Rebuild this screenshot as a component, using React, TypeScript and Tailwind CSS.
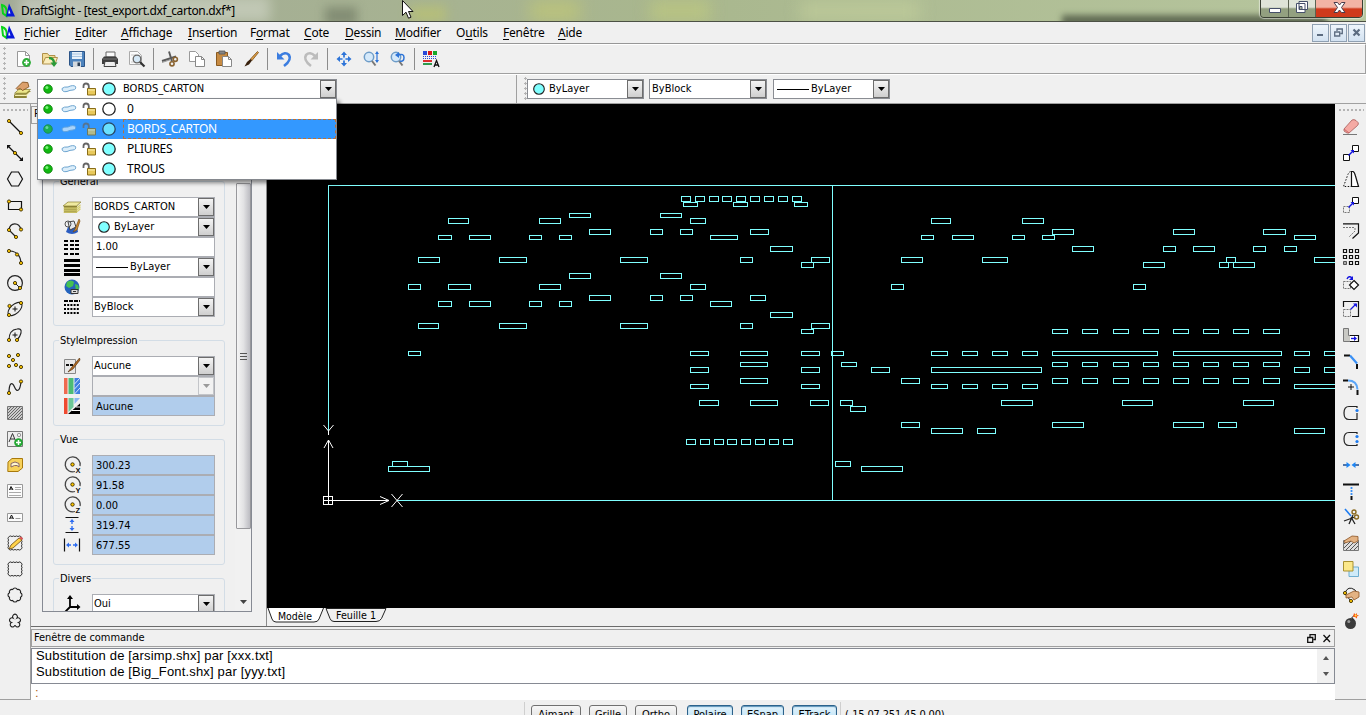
import React from "react";

const TAHOMA = "font-['DejaVu_Sans_Condensed','DejaVu_Sans',sans-serif] text-[11px] leading-[14px] text-black whitespace-nowrap";
const SEGOE = "font-['Noto_Sans','Open_Sans',sans-serif] text-[12px] leading-[16px] whitespace-nowrap";

/* ---------- drawing helpers ---------- */

function Icon({ children, size = 16 }: { children: React.ReactNode; size?: number }) {
  return (
    <svg width={size} height={size} viewBox="0 0 16 16" fill="none" stroke="none" className="block shrink-0 overflow-visible">
      {children}
    </svg>
  );
}

function Dots({ at }: { at: number[][] }) {
  return (
    <>
      {at.map(([x, y]) => (
        <circle key={`${x}-${y}`} cx={x} cy={y} r="1.6" fill="#ffc800" stroke="#3a2c00" strokeWidth="0.9" />
      ))}
    </>
  );
}

const scallop =
  "M2 2" +
  "a1.6 1.6 0 0 1 3 0".repeat(4) +
  "a1.6 1.6 0 0 1 0 3".repeat(4) +
  "a1.6 1.6 0 0 1 -3 0".repeat(4) +
  "a1.6 1.6 0 0 1 0 -3".repeat(4);

/* ---------- left: drawing tools ---------- */

const drawTools: React.ReactNode[] = [
  <><path d="M2 2L14 14" stroke="#111" strokeWidth="1.200" /><Dots at={[[2, 2], [14, 14]]} /></>,
  <><path d="M1 1L15 15" stroke="#111" strokeWidth="1.200" /><path d="M0 0h4L0 4zM16 16h-4l4-4z" fill="#111" /><Dots at={[[8, 8]]} /></>,
  <path d="M4.500 1h7l4 7l-4 7h-7L.5 8z" stroke="#111" strokeWidth="1.200" />,
  <><path d="M1.500 4.500h13v8h-13z" stroke="#111" strokeWidth="1.200" /><Dots at={[[2, 4.500], [14, 12.500]]} /></>,
  <><path d="M14 6.500C12-1 3-1 2 7l7 7" stroke="#222" strokeWidth="1.200" /><Dots at={[[2, 7], [14, 6.500], [9, 14]]} /></>,
  <><path d="M2 2Q13 2 14 14" stroke="#222" strokeWidth="1.200" /><Dots at={[[2, 2], [10, 5.500], [14, 14]]} /></>,
  <><circle cx="8" cy="8" r="7.400" stroke="#222" strokeWidth="1.200" /><path d="M8 8l5 5" stroke="#222" /><Dots at={[[8, 8], [13, 13]]} /></>,
  <><ellipse cx="8" cy="8" rx="8.500" ry="4.500" transform="rotate(-42 8 8)" stroke="#222" strokeWidth="1.100" /><path d="M8 5.500v5M5.500 8h5" stroke="#111" /><Dots at={[[2, 14], [2.500, 5], [14, 2]]} /></>,
  <><path d="M2 13Q2 3 10 2Q15 1 14 6Q13 10 10 13" stroke="#222" strokeWidth="1.100" /><path d="M8 5.500v5M5.500 8h5" stroke="#111" /><Dots at={[[2, 13], [10, 13]]} /></>,
  <Dots at={[[2, 3], [11, 2], [6, 7], [2, 13], [9, 12], [14, 14]]} />,
  <><path d="M2 14C2 4 5 2 7.500 8S13 12 14 3" stroke="#222" strokeWidth="1.200" /><Dots at={[[2, 14], [14, 2.500]]} /></>,
  <><path d="M.5 1.500h15v13h-15z" fill="#ccc" stroke="#777" /><path d="M1 5l4-4M1 8l7-7M1 11l10-10M1 14L14 1M4 14L15 3M7 14l8-8M10 14l5-5M13 14l2-2" stroke="#666" /></>,
  <>
    <path d="M.5.5h15v15H.5z" fill="#eee" stroke="#777" />
    <path d="M2 11L5.500 2.500L9 11M3.500 8h4" stroke="#333" />
    <circle cx="12" cy="4" r="1.700" stroke="#999" /><circle cx="11.500" cy="11.500" r="4.300" fill="#22a832" /><path d="M11.500 9v5M9 11.500h5" stroke="#fff" strokeWidth="1.500" />
  </>,
  <><path d="M1 5l4-3.500h10.500V11L11 14.500H.8z" fill="#f7d15a" stroke="#a8790c" /><path d="M4 10V6.500q4-3 8 0V10l-2-1.500H7.500z" fill="#fff6d0" stroke="#866" /></>,
  <><path d="M.5 1.500h15v13h-15z" fill="#fcfcfc" stroke="#999" /><path d="M2.500 7L4 3.500L6 7M3 6h2.500" stroke="#111" /><path d="M8 4.500h6M8 6.500h6M2 9.500h12M2 12.500h12" stroke="#aaa" /></>,
  <><path d="M.5 4.500h15v8h-15z" fill="#fcfcfc" stroke="#999" /><path d="M2.500 10L4.500 6L6.500 10M3 9h3" stroke="#111" /><path d="M8.500 9.500h5" stroke="#999" /></>,
  <><path d={scallop} stroke="#222" strokeWidth="0.900" /><path d="M2 14l2-4L12 3l3 2L6 13z" fill="#ffd24a" stroke="#6b4a10" strokeWidth="0.800" /><path d="M12 3l2-1.500L16 3.500L15 5z" fill="#d55" /></>,
  <path d={scallop} stroke="#222" />,
  <path d="M5.700 2.500A2.500 2.500 0 0 1 10.300 2.500A2.500 2.500 0 0 1 13.500 5.700A2.500 2.500 0 0 1 13.500 10.300A2.500 2.500 0 0 1 10.300 13.500A2.500 2.500 0 0 1 5.700 13.500A2.500 2.500 0 0 1 2.500 10.300A2.500 2.500 0 0 1 2.500 5.700A2.500 2.500 0 0 1 5.700 2.500z" stroke="#222" strokeWidth="1.100" />,
  <path d="M6 5A2.400 2.400 0 1 1 10 5A2.400 2.400 0 1 1 11.500 9.500A2.400 2.400 0 1 1 8 12A2.400 2.400 0 1 1 4.500 9.500A2.400 2.400 0 1 1 6 5z" stroke="#222" strokeWidth="1.100" />,
];

/* ---------- right: modification tools ---------- */

const editTools: React.ReactNode[] = [
  <><path d="M0 15.500h14" stroke="#777" /><path d="M1 10L9 1q2-1 4 .5l2 2q1 1.500-.5 3L6 14H4L1 12z" fill="#f5aaa4" stroke="#a65a58" strokeWidth="0.800" /><path d="M1 10l5 4" stroke="#c66" /></>,
  <><path d="M.5 9.500h6v6h-6zM9.500.5h6v6h-6z" fill="#fff" stroke="#111" /><path d="M5.500 10.500L10 6" stroke="#1414e0" strokeWidth="1.400" /><path d="M7.500 5h3.500v3.500z" fill="#1414e0" /></>,
  <><path d="M8.500.5H10Q11.500 1 12.500 5L15.500 15.500H8.500z" fill="#fff" stroke="#111" strokeWidth="1.200" /><path d="M7.500.5Q5.500 1 4 6L.5 15.500H8" stroke="#111" strokeDasharray="1.500 1.500" /></>,
  <><path d="M.5 9.500h6v6h-6z" stroke="#777" strokeDasharray="2 1" /><path d="M9.500.5h6v6h-6z" fill="#fff" stroke="#111" /><path d="M5.500 10.500L10 6" stroke="#1414e0" strokeWidth="1.400" /><path d="M7.500 5h3.500v3.500z" fill="#1414e0" /></>,
  <><path d="M0 .8h15.500V10l-6 5.500" stroke="#111" strokeWidth="1.200" /><path d="M0 4.500h12M12 5v3l-6 6" stroke="#777" strokeDasharray="2 1" /></>,
  <><path d="M.5.5h3v3h-3zM6.500.5h3v3h-3zM12.500.5h3v3h-3zM.5 6.500h3v3h-3zM6.500 6.500h3v3h-3zM12.500 6.500h3v3h-3zM6.500 12.500h3v3h-3zM12.500 12.500h3v3h-3z" fill="#fff" stroke="#111" strokeWidth="1.200" /><path d="M.5 12.500h3v3h-3z" fill="#aaa" stroke="#555" /></>,
  <><path d="M.5 6.500h7v7h-7z" stroke="#777" strokeDasharray="2 1" /><path d="M11 5.500l4.500 4.500l-4.500 4.500L6.500 10z" fill="#fff" stroke="#111" strokeWidth="1.200" /><path d="M4 4Q6 0 9 3" stroke="#1414e0" strokeWidth="1.400" /><path d="M10 1v4H6z" fill="#1414e0" /></>,
  <><path d="M.5 6V.5h15v15H9" stroke="#111" strokeWidth="1.200" /><path d="M.5 8.500h7v7h-7z" stroke="#777" strokeDasharray="2 1" /><path d="M7.500 8.500L13 3" stroke="#1414e0" strokeWidth="1.300" /><path d="M10 2.500h4v4z" fill="#1414e0" /></>,
  <><path d="M.5 1.500h5v7h2v6h-7z" fill="#c9c9c4" stroke="#777" /><path d="M7 8.500h8.500v6H7" fill="#fff" stroke="#111" strokeWidth="1.200" /><path d="M8 11.500h4" stroke="#1414e0" strokeWidth="1.400" /><path d="M11 9l3 2.500l-3 2.500z" fill="#1414e0" /></>,
  <><path d="M1 2.500h6M14 11v5" stroke="#111" strokeWidth="2" /><path d="M7 2.500l7 8" stroke="#3a90f5" strokeWidth="2.200" /></>,
  <><path d="M0 1.500h5M14.500 11v5" stroke="#111" strokeWidth="2" /><path d="M5 1.500q9 0 9.500 9" stroke="#5aa5f8" strokeWidth="2" /><path d="M8 5v6M5 8h6" stroke="#111" /></>,
  <><path d="M14 3V1.500H6Q1 1.500 1 8t5 6.500h8V8" stroke="#222" strokeWidth="1.200" /><circle cx="14" cy="5.500" r="1.600" fill="#1d7bf0" /></>,
  <><path d="M14 3V1.500H6Q1 1.500 1 8t5 6.500h8V13" stroke="#222" strokeWidth="1.200" /><circle cx="14" cy="5.500" r="1.600" fill="#1d7bf0" /><circle cx="14" cy="10.500" r="1.600" fill="#1d7bf0" /></>,
  <><path d="M0 8h5M11 8h5" stroke="#1b4c92" strokeWidth="1.600" /><path d="M3.500 5L7.500 8l-4 3zM12.500 5L8.500 8l4 3z" fill="#1d86f5" /></>,
  <><path d="M0 1.500h16M8.500 13v4" stroke="#111" strokeWidth="2" /><path d="M8.500 4v8" stroke="#3a90f5" strokeWidth="1.800" strokeDasharray="2 1" /></>,
  <><path d="M2 0l6 7" stroke="#1d7bf0" strokeWidth="1.600" /><path d="M1 12l11-4M6 15l4-9M8 8l4 7" stroke="#222" strokeWidth="1.300" /><circle cx="11" cy="3" r="2" stroke="#8a6a20" strokeWidth="1.400" /><circle cx="13.500" cy="8" r="2" stroke="#8a6a20" strokeWidth="1.400" /></>,
  <><path d="M.5 5.500h15v10H.5z" fill="#ddd" stroke="#777" /><path d="M1 9l3-3M1 13l7-7M3 15l9-9M7 15l8-8M11 15l4-4" stroke="#555" /><path d="M1 6L9 1l6 .5v4.500L11 8L8 6L2 8z" fill="#e3b283" stroke="#8b5425" strokeWidth="0.800" /></>,
  <><path d="M6 6h9.500v9.500H6z" fill="#cfeaf8" stroke="#6faed0" /><path d="M.5.5H10V10H.5z" fill="#fbe88a" stroke="#a89131" /></>,
  <><path d="M2 6Q5-2 12 3L14 6M2 7l6 7" stroke="#222" /><path d="M3 8l8-4l5 1v5l-5 3l-2-3l-6 1z" fill="#e3b283" stroke="#8b5425" strokeWidth="0.800" /><Dots at={[[2, 6], [8, 14]]} /></>,
  <><circle cx="7.500" cy="10.500" r="5.500" fill="#3c3c3c" /><circle cx="5.800" cy="8.500" r="1.500" fill="#999" /><path d="M8 4l3 2l-1 2z" fill="#333" /><path d="M9 5q1-3 3-2.500" stroke="#555" /><path d="M11 0l1.500 1.500L14 0v2l2 .5l-2 1v2l-2-1.500L10 4z" fill="#fb5a14" /><circle cx="12.700" cy="2.500" r="1" fill="#ffe44a" /></>,
];

/* ---------- standard toolbar ---------- */

const hand = <path d="M2 7L8 1l5 .5l1 4L8 9L6 7L3 8z" fill="#dba06c" stroke="#80501e" strokeWidth="0.800" />;
const layers = (
  <>
    <path d="M0 13l5-3.500h11L12 13v3H0z" fill="#8c8335" />
    <path d="M.5 11.500l4-3.500h11l-4 3.500z" fill="#ece68a" stroke="#8c8335" strokeWidth="0.700" />
    <path d="M1 13.500h10.500L15 10.500" stroke="#f5efad" />
  </>
);

const scissors = (
  <>
    <path d="M0 10l14-4.500M7 0.500l3 10" stroke="#5a5a5a" strokeWidth="1.900" />
    <path d="M0 11.500l9-3" stroke="#999" />
    <circle cx="10" cy="12.800" r="2.100" stroke="#8a6330" strokeWidth="1.600" />
    <circle cx="13.300" cy="8.300" r="2.100" stroke="#8a6330" strokeWidth="1.600" />
  </>
);

const toolGroups: React.ReactNode[][] = [
  [
    <><path d="M2.500.5h8l4 4v11h-12z" fill="#fff" stroke="#999" /><path d="M10.500.5v4h4" stroke="#999" /><circle cx="11.500" cy="11.500" r="4.400" fill="#2fae3a" /><path d="M11.500 9v5M9 11.500h5" stroke="#fff" strokeWidth="1.600" /></>,
    <><path d="M.5 13V2.500h5l1.500 2h6V7" fill="#f2dc98" stroke="#b0914a" /><path d="M.5 13L3.500 6.500h12l-2.500 6.500z" fill="#fbeebd" stroke="#b0914a" /><path d="M7 7q5 0 5 5" stroke="#2a9a38" strokeWidth="2.400" /><path d="M8.500 11.500h7L12 16z" fill="#2a9a38" /></>,
    <><path d="M.5.5h15v15H2l-1.500-1.500z" fill="#4d83bd" stroke="#2c5487" /><path d="M3 1h10v7H3z" fill="#e8f1fa" /><path d="M3 3h10M3 5.500h10" stroke="#a9c6e2" /><path d="M4 10.500h8V16H4z" fill="#d4d9de" /><path d="M8.500 11.500h2.500V15H8.500z" fill="#2c3e55" /></>,
  ],
  [
    <><path d="M4 1h9v5H4z" fill="#fafafa" stroke="#666" /><path d="M2 5.500h12l2 2.500v5H0V8z" fill="#3e3e3e" /><path d="M1 8h14" stroke="#777" /><path d="M3 10.500h10l1 5H2z" fill="#eee" stroke="#444" /></>,
    <><path d="M.5.5h8l4 4v9H.5z" fill="#fafafa" stroke="#aaa" /><path d="M2 4h5M2 11h4" stroke="#ccc" /><circle cx="8" cy="8" r="3.800" fill="#d5e8f6" stroke="#666" strokeWidth="1.300" /><path d="M11 11l4.500 4.500" stroke="#333" strokeWidth="2.200" /></>,
  ],
  [
    scissors,
    <><path d="M.5.5h6l3 3v7h-9z" fill="#fff" stroke="#999" /><path d="M6.500 5.500h6l3 3v7h-9z" fill="#fff" stroke="#888" /><path d="M12.500 5.500v3h3" stroke="#888" /></>,
    <><path d="M.5 1.500h11v13H.5z" fill="#c78b43" stroke="#8a5a20" /><path d="M3 0h6v3H3z" fill="#888" stroke="#555" strokeWidth="0.800" /><path d="M6.500 5.500h6l3 3v7h-9z" fill="#fff" stroke="#888" /><path d="M12.500 5.500v3h3" stroke="#888" /></>,
    <><path d="M14.500.5L7.500 8l1.500 1.500L15.500 1.500z" fill="#e0a24a" stroke="#7a4b12" strokeWidth="0.800" /><path d="M7.500 8L4 11l-2.500 4.500L6 13.500l3-4z" fill="#38200c" /></>,
  ],
  [
    <><path d="M4 5Q9 0 13 4Q16 9 8 15" stroke="#3b7de0" strokeWidth="2.600" /><path d="M1 1v7.500h7.500z" fill="#3b7de0" /></>,
    <><path d="M12 5Q7 0 3 4Q0 9 8 15" stroke="#bcbcbc" strokeWidth="2.600" /><path d="M15 1v7.500H7.500z" fill="#bcbcbc" /></>,
  ],
  [
    <><path d="M8 3v10M3 8h10" stroke="#2d74d8" strokeWidth="1.700" /><path d="M8 .5L11 4H5zM8 15.500L11 12H5zM.5 8L4 5v6zM15.500 8L12 5v6z" fill="#2d74d8" /><path d="M8 6l2 2l-2 2l-2-2z" fill="#d5e5fa" /></>,
    <><circle cx="6" cy="6" r="4.700" fill="#d5e9fa" stroke="#6d9cc8" strokeWidth="1.500" /><path d="M9 10l3.500 4.500" stroke="#777" strokeWidth="2" /><path d="M14 2v9" stroke="#2d74d8" strokeWidth="1.200" /><path d="M14 0l2 3h-4zM14 12l2-3h-4z" fill="#2d74d8" /></>,
    <><circle cx="6" cy="6" r="4.700" fill="#d5e9fa" stroke="#6d9cc8" strokeWidth="1.500" /><path d="M9 10l3.500 4.500" stroke="#777" strokeWidth="2" /><path d="M8 4q6-2 6 2.500T10 10" stroke="#2d74d8" strokeWidth="1.500" /><path d="M9 1v6L5 4z" fill="#2d74d8" /></>,
  ],
  [
    <><path d="M0 0h4v4H0z" fill="#2848d8" /><path d="M5 0h4v4H5z" fill="#d81818" /><path d="M10 0h4v4h-4z" fill="#18a828" /><path d="M0 5.500h14M0 7.500h14" stroke="#2848d8" strokeDasharray="1 1" /><path d="M0 10h9" stroke="#d81818" strokeWidth="1.800" /><path d="M0 13h9" stroke="#18903a" strokeWidth="1.800" /><path d="M11 16l2.500-6.500L16 16M12 14h3" stroke="#111" strokeWidth="1.300" /></>,
  ],
];

function Logo() {
  return (
    <svg width="14" height="15" viewBox="0 0 14 14" className="block shrink-0">
      <path d="M1 1.500Q7 3 5.500 12.500L2 10z" fill="none" stroke="#08d418" strokeWidth="2" />
      <path d="M8 0l6 13H5z" fill="#0818d8" />
      <path d="M8 6l1.500 4H7.200z" fill="#fff" />
    </svg>
  );
}

/* ---------- small shared widgets ---------- */

function ArrowButton({ disabled }: { disabled?: boolean }) {
  return (
    <span className={`flex w-[16px] shrink-0 items-center justify-center border ${disabled ? "border-[#c3c5c9] bg-[#f2f2f2]" : "border-[#6d6d6d] bg-linear-to-b from-[#f4f4f4] to-[#cfcfcf]"}`}>
      <svg width="7" height="4" viewBox="0 0 7 4"><path d="M0 0h7L3.500 4z" fill={disabled ? "#9a9a9a" : "#000"} /></svg>
    </span>
  );
}

function Swatch({ size = 12, fill = "#80ffff" }: { size?: number; fill?: string }) {
  return (
    <svg width={size} height={size} viewBox="0 0 14 14" className="shrink-0">
      <circle cx="7" cy="7" r="6.200" fill={fill} stroke="#222" strokeWidth="1.300" />
    </svg>
  );
}

function LayerState({ fill = "#80ffff", dim }: { fill?: string; dim?: boolean }) {
  return (
    <span className={`flex items-center ${dim ? "opacity-70" : ""}`}>
      <svg width="10" height="10" viewBox="0 0 10 10" className="mr-[8px]">
        <circle cx="5" cy="5" r="4.300" fill="#11b811" stroke="#0b7d0b" strokeWidth="0.800" />
        <circle cx="3.900" cy="3.500" r="1.500" fill="#7af07a" />
      </svg>
      <svg width="16" height="10" viewBox="0 0 16 10" className="mr-[5px]">
        <path d="M1 4.500Q3 2.500 7 3Q12 .5 14.500 2.500Q15.500 5.500 12 6Q9 6 6 7.500Q1 8.500 1 4.500z" fill="#dceefa" stroke="#6ea5d0" />
      </svg>
      <svg width="14" height="14" viewBox="0 0 14 14" className="mr-[6px]">
        <path d="M1.500 6V4Q1.500 1.500 4 1.500T6.800 4v3" fill="none" stroke="#666" strokeWidth="1.800" />
        <path d="M5.500 6.500h8v6.500h-8z" fill="#e8c95c" stroke="#8a6d17" />
        <path d="M6 8h7" stroke="#fbeeb0" />
      </svg>
      <Swatch size={14} fill={fill} />
    </span>
  );
}

function Grip() {
  return <span className="h-[26px] w-[3px] bg-[radial-gradient(circle,#b4b4b4_1px,transparent_1.3px)] bg-size-[3px_5px]" />;
}

/* ---------- properties panel ---------- */

const propIcons: Record<string, React.ReactNode> = {
  layer: <><path d="M0 6l4-4h12l-3 4v7H0z" fill="#8c8335" transform="translate(0 1)" /><path d="M-1 7l5-4h13l-4.500 4z" fill="#f0eaa0" stroke="#8c8335" strokeWidth="0.700" /><path d="M-.5 9.200H12.500l4-3.500M-.5 11.200H12.500l4-3.500M-.5 13.200H12.500l4-3.500" stroke="#d8cf70" strokeWidth="1.200" /></>,
  color: <><path d="M2 13q6 4 12 0l-1-5H4z" fill="#2a5cc0" /><path d="M4 3l6-1l2 6l-6 3z" fill="#e4e8ee" stroke="#444" /><circle cx="4" cy="5" r="3" stroke="#555" /><path d="M15 0l-4 10l-2 3l4-2L16 2z" fill="#cc8a30" stroke="#6e410c" strokeWidth="0.600" /></>,
  scale: <path d="M0 1.500h16M0 6h16M0 10h16M0 14.500h16" stroke="#000" strokeWidth="2" strokeDasharray="4 1.500" shapeRendering="crispEdges" />,
  weight: <path d="M0 1.500h16M0 6.500h16M0 11.500h16M0 15.500h16" stroke="#000" strokeWidth="3" shapeRendering="crispEdges" />,
  link: <><circle cx="8" cy="8" r="7.500" fill="#2463bd" /><path d="M3 3q4-3 7 0l-1 4l-4 2l-3-2zM11 5l3 1l1 4l-3 2z" fill="#44c052" /><path d="M7 10.500h7v4H7z" fill="#ddd" stroke="#333" /><path d="M9 12.500h3" stroke="#333" /></>,
  type: <><path d="M0 2h16" stroke="#000" strokeWidth="2" strokeDasharray="4 1" /><path d="M0 6h16M0 10h16M0 14h16" stroke="#000" strokeWidth="1.800" strokeDasharray="2 1.200" /></>,
  style: <><path d="M.5 1.500h11v14H.5z" fill="#e8e8e8" stroke="#888" /><path d="M2 7h7" stroke="#111" strokeWidth="2" strokeDasharray="3 1" /><path d="M15.500 0L8 9l-4 5l5-3L16 2z" fill="#b06b25" stroke="#4d2c08" strokeWidth="0.600" /></>,
  table: <><path d="M0 0h3.500v16H0z" fill="#ef6a50" /><path d="M4.500 0h5v16h-5z" fill="#4cbc74" /><path d="M10.500 0H16v16h-5.500z" fill="#3f7fe0" /><path d="M10.500 6L16 0M10.500 11L16 5M10.500 16L16 10" stroke="#d5e5fa" /></>,
  attach: <><path d="M0 0h3.500v16H0z" fill="#ef4a30" /><path d="M4.500 0h5v9l-5 5z" fill="#6cc896" /><path d="M10.500 0H16L10.500 6z" fill="#8ab8f0" /><path d="M16 5.500V16H4z" fill="#000" /><path d="M12 9h4M8 12.500h8" stroke="#fff" /></>,
  axes: <><path d="M6 1v10h9M6 11l-5 5" stroke="#000" strokeWidth="1.800" /><path d="M6-1l3 4H3zM16.500 11L13 8v6z" fill="#000" /></>,
  height: <><path d="M1.500 .5h13M1.500 15.500h13" stroke="#111" strokeWidth="1.200" /><path d="M8 3v10" stroke="#2d6cf0" strokeWidth="1.300" strokeDasharray="4 2" /><path d="M8 2l2.500 3h-5zM8 14l2.500-3h-5z" fill="#2d6cf0" /></>,
  width: <><path d="M.5 1.500v13M15.500 1.500v13" stroke="#111" strokeWidth="1.200" /><path d="M3 8h10" stroke="#2d6cf0" strokeWidth="1.300" strokeDasharray="4 2" /><path d="M2 8l3-2.500v5zM14 8l-3-2.500v5z" fill="#2d6cf0" /></>,
};

function Centre({ axis }: { axis: string }) {
  return (
    <svg width="19" height="19" viewBox="0 0 19 19" className="block shrink-0">
      <path d="M11 15.500A7.500 7.500 0 1 1 16 10" fill="none" stroke="#444" strokeWidth="1.300" />
      <circle cx="8.500" cy="8.500" r="1.700" fill="#ffc800" stroke="#3a2c00" strokeWidth="0.900" />
      <text x="11.500" y="17" fontSize="7.500" fontWeight="bold" fontFamily="Liberation Sans, sans-serif" fill="#111">{axis}</text>
    </svg>
  );
}

function Row({ icon, text, kind = "combo", lead }: { icon: React.ReactNode; text: string; kind?: "combo" | "plain" | "fixed" | "off"; lead?: React.ReactNode }) {
  const combo = kind === "combo" || kind === "off";
  const bg = kind === "fixed" ? "bg-[#b1cdec] pl-[3px] pt-[1px]" : kind === "off" ? "bg-[#f0f0f0]" : kind === "plain" ? "bg-white pl-[3px]" : "bg-white pl-[1px]";
  return (
    <div className="flex h-[20px]">
      <span className="flex w-[28px] items-center">{icon}</span>
      <span className={`flex w-[123px] border border-[#abadb3] ${bg}`}>
        <span className={`flex flex-1 items-center ${TAHOMA}`}>{lead}{text}</span>
        {combo && <ArrowButton disabled={kind === "off"} />}
      </span>
    </div>
  );
}

function Group({ title, className, children }: { title: string; className: string; children: React.ReactNode }) {
  return (
    <section className={`relative ml-[10px] w-[172px] shrink-0 rounded-[3px] border border-[#d3dde6] pl-[10px] ${className}`}>
      <h3 className={`absolute -top-[7px] left-[5px] bg-[#f0f0f0] px-[1px] tracking-[-0.1px] ${TAHOMA}`}>{title}</h3>
      {children}
    </section>
  );
}

const p = (name: string) => <Icon>{propIcons[name]}</Icon>;
const line = <span className="ml-[2px] mr-[2px] h-px w-[32px] bg-black" />;

function Properties() {
  return (
    <aside className="flex w-[235px] shrink-0 flex-col pl-[11px] pt-[24px]">
      <div className="flex h-[484px] w-[210px] border border-[#868a93]">
        <div className="flex w-[192px] flex-col overflow-hidden pt-[52px]">
          <Group title="General" className="h-[145px] pt-[15px]">
            <Row icon={p("layer")} text="BORDS_CARTON" />
            <Row icon={p("color")} text="ByLayer" lead={<span className="ml-[4px] mr-[4px] flex"><Swatch size={12} /></span>} />
            <Row icon={p("scale")} text="1.00" kind="plain" />
            <Row icon={p("weight")} text="ByLayer" lead={line} />
            <Row icon={p("link")} text="" kind="plain" />
            <Row icon={p("type")} text="ByBlock" />
          </Group>
          <Group title="StyleImpression" className="mt-[14px] h-[86px] pt-[15px]">
            <Row icon={p("style")} text="Aucune" />
            <Row icon={p("table")} text="" kind="off" />
            <Row icon={p("attach")} text="Aucune" kind="fixed" />
          </Group>
          <Group title="Vue" className="mt-[13px] h-[126px] pt-[15px]">
            <Row icon={<Centre axis="X" />} text="300.23" kind="fixed" />
            <Row icon={<Centre axis="Y" />} text="91.58" kind="fixed" />
            <Row icon={<Centre axis="Z" />} text="0.00" kind="fixed" />
            <Row icon={p("height")} text="319.74" kind="fixed" />
            <Row icon={p("width")} text="677.55" kind="fixed" />
          </Group>
          <Group title="Divers" className="mt-[13px] h-[60px] pt-[15px]">
            <Row icon={p("axes")} text="Oui" />
          </Group>
        </div>
        <div className="flex w-[16px] flex-col items-center justify-between bg-[#f1f1f1] pb-[7px] pt-[54px]">
          <div className="flex h-[346px] w-[15px] flex-col items-center justify-center gap-[2px] rounded-[1px] border border-[#98989c] bg-linear-to-r from-[#f5f5f5] via-[#e2e2e4] to-[#bcbcc2]">
            <i className="h-px w-[7px] bg-[#555]" /><i className="h-px w-[7px] bg-[#555]" /><i className="h-px w-[7px] bg-[#555]" />
          </div>
          <svg width="7" height="4" viewBox="0 0 7 4"><path d="M0 0h7L3.500 4z" fill="#444" /></svg>
        </div>
      </div>
    </aside>
  );
}

/* ---------- drawing area ---------- */

/* Each row: top, height, then left/width pairs. */
const shapes: [number, number, number[]][] = [
  [196, 6, [681, 10, 695, 10, 709, 10, 722, 10, 736, 10, 750, 10, 764, 10, 778, 10, 792, 10]],
  [202, 5, [683, 15, 733, 15, 794, 14]],
  [213, 5, [569, 22, 660, 22]],
  [218, 6, [448, 21, 539, 22, 690, 16, 931, 20, 1022, 22]],
  [229, 6, [589, 22, 650, 13, 680, 13, 750, 19, 1052, 22, 1173, 22, 1263, 23]],
  [235, 5, [438, 14, 469, 22, 529, 13, 559, 13, 710, 28, 921, 13, 952, 22, 1012, 13, 1042, 13, 1294, 22]],
  [246, 6, [770, 23, 1072, 22, 1163, 13, 1193, 22, 1253, 13, 1284, 13]],
  [257, 6, [418, 22, 499, 28, 620, 28, 740, 13, 811, 19, 901, 22, 982, 26, 1226, 10, 1314, 30]],
  [262, 6, [801, 13, 1143, 22, 1219, 10, 1233, 22]],
  [273, 6, [569, 22, 660, 22]],
  [284, 6, [408, 13, 448, 23, 539, 22, 690, 16, 891, 13, 1133, 13]],
  [295, 6, [589, 22, 650, 13, 680, 13, 750, 16]],
  [301, 6, [438, 14, 469, 22, 529, 13, 559, 13, 710, 22]],
  [312, 6, [770, 23]],
  [323, 6, [418, 21, 499, 28, 620, 28, 740, 13, 811, 19]],
  [329, 5, [801, 13, 1052, 16, 1082, 16, 1113, 16, 1143, 16, 1173, 16, 1203, 16, 1233, 16, 1263, 17]],
  [351, 5, [408, 13, 690, 19, 740, 28, 801, 19, 831, 13, 931, 17, 962, 16, 992, 16, 1022, 16, 1052, 106, 1173, 109, 1294, 16, 1324, 20]],
  [362, 5, [740, 28, 841, 16, 1052, 16, 1082, 16, 1113, 16, 1143, 16, 1173, 16, 1203, 16, 1233, 16, 1263, 17]],
  [367, 6, [690, 19, 801, 19, 871, 19, 931, 111, 1294, 16, 1324, 20]],
  [378, 6, [740, 28, 901, 19, 1052, 16, 1082, 16, 1113, 16, 1143, 16, 1173, 16, 1203, 16, 1233, 16, 1263, 17]],
  [384, 5, [690, 19, 801, 19, 931, 17, 962, 16, 992, 16, 1022, 16, 1294, 50]],
  [400, 6, [699, 20, 750, 28, 810, 19, 840, 13, 1001, 32, 1122, 31, 1243, 31]],
  [406, 6, [850, 16]],
  [422, 6, [901, 19, 1052, 32, 1173, 31, 1218, 19]],
  [428, 6, [931, 32, 977, 19, 1294, 31]],
  [439, 6, [686, 10, 700, 10, 714, 10, 727, 10, 741, 10, 755, 10, 769, 10, 783, 10]],
  [461, 6, [392, 16, 835, 16]],
  [466, 6, [388, 42, 861, 42]],
];

function Drawing() {
  return (
    <svg width="1068" height="504" viewBox="267 104 1068 504" className="block shrink-0 bg-black" fill="none" shapeRendering="crispEdges">
      <g stroke="#80ffff">
        <path d="M1340 185.500H328.500V432M832.500 185.500V500.500M397 500.500H1340" />
        {shapes.flatMap(([y, h, xs]) =>
          xs.map((x, i) => (i % 2 === 0 ? <rect key={`${y}-${x}`} x={x + 0.5} y={y + 0.5} width={xs[i + 1] - 1} height={h - 1} /> : null))
        )}
      </g>
      <g stroke="#fff">
        <path d="M328.500 440V505M323 500.500H389M323.500 496.500h9v8h-9z" />
        <path d="M324 448l4.500-8l4.500 8M380 496.500l9 4l-9 4M391.500 494l11 13M402.500 494l-11 13M323.500 425l5 6l5-6M328.500 431v4" shapeRendering="auto" />
      </g>
    </svg>
  );
}

function SheetTabs() {
  return (
    <svg width="130" height="15" viewBox="267 608 130 15" className="block" fontFamily="'DejaVu Sans Condensed','DejaVu Sans',sans-serif" fontSize="11">
      <path d="M326 608.500l4 10q1 3 4 3h42q4 0 5.500-3l4.500-10z" fill="#f0f0f0" stroke="#222" />
      <path d="M268 608l4 11q1 3 4 3h38q4 0 5-3l4.500-11" fill="#fff" stroke="#222" />
      <text x="278" y="620" textLength="34" lengthAdjust="spacingAndGlyphs">Modèle</text>
      <text x="336" y="619" textLength="40" lengthAdjust="spacingAndGlyphs">Feuille 1</text>
    </svg>
  );
}

/* ---------- top area ---------- */

const menus: [string, number, string][] = [
  ["Fichier", 0, "w-[51px]"], ["Editer", 0, "w-[46px]"], ["Affichage", 0, "w-[67px]"], ["Insertion", 0, "w-[62px]"],
  ["Format", 1, "w-[54px]"], ["Cote", 0, "w-[41px]"], ["Dessin", 0, "w-[50px]"], ["Modifier", 0, "w-[61px]"],
  ["Outils", 1, "w-[47px]"], ["Fenêtre", 0, "w-[55px]"], ["Aide", 0, "w-[40px]"],
];

function TitleBar() {
  return (
    <header className="relative flex h-[22px] items-center overflow-hidden border-b border-[#4c5145] bg-linear-to-r from-[#a3ab97] via-[#a9b78e] to-[#b7c69e]">
      <span className="absolute -top-1 left-[20px] h-[26px] w-[250px] bg-white/30 blur-[6px]" />
      <span className="absolute left-[325px] top-[7px] h-[18px] w-[32px] bg-[#6d7760]/60 blur-[5px]" />
      <span className="absolute left-[410px] top-[6px] h-[16px] w-[36px] bg-[#c6cc62]/50 blur-[6px]" />
      <span className="absolute left-[530px] top-0 h-[22px] w-[50px] bg-[#cbd06c]/50 blur-[8px]" />
      <span className="absolute left-[650px] top-0 h-[22px] w-[60px] bg-[#cfd674]/40 blur-[8px]" />
      <span className="absolute left-[800px] top-0 h-[22px] w-[120px] bg-[#c5d09c]/60 blur-[8px]" />
      <span className="absolute left-[1062px] top-[15px] h-[12px] w-[265px] bg-[#4e5844]/80 blur-[3px]" />
      <span className="relative ml-[1px] flex"><Logo /></span>
      <h1 className={`relative ml-[6px] tracking-[-0.370px] text-black ${SEGOE}`}>DraftSight - [test_export.dxf_carton.dxf*]</h1>
      <svg width="14" height="20" viewBox="0 0 14 20" className="absolute left-[401px] top-0">
        <path d="M1.500.5v15l3.500-3.300l2.500 6l2.500-1l-2.500-5.700H12z" fill="#fff" stroke="#111" />
      </svg>
      <div className="absolute right-[3px] top-[-2px] flex h-[20px] overflow-hidden rounded-b-[4px] border border-[#3a4034] shadow-[0_0_1px_1px_rgba(255,255,255,0.5)]">
        <span className="flex w-[28px] items-end justify-center border-r border-[#5b6352] bg-linear-to-b from-[#dfe4d8] from-45% to-[#93a080] to-55% pb-[4px]">
          <svg width="12" height="5" viewBox="0 0 12 5"><path d="M.5.5h11v4H.5z" fill="#fff" stroke="#46506a" /></svg>
        </span>
        <span className="flex w-[27px] items-end justify-center border-r border-[#5b6352] bg-linear-to-b from-[#dfe4d8] from-45% to-[#93a080] to-55% pb-[4px]">
          <svg width="12" height="12" viewBox="0 0 12 12"><path d="M3 .5h8.500v8H3zM.5 2.500H9v9H.5z" fill="#fff" stroke="#46506a" /><path d="M3.500 5.500h2.500v3H3.500z" fill="#aab49a" stroke="#46506a" /></svg>
        </span>
        <span className="flex w-[46px] items-end justify-center bg-linear-to-b from-[#f2b3a4] from-45% to-[#cf3a1c] to-55% pb-[4px]">
          <svg width="13" height="11" viewBox="0 0 13 11"><path d="M1 .5h3.500l2 2.500l2-2.500H12L8.500 5.500L12 10.500H8.500l-2-2.500l-2 2.500H1l3.500-5z" fill="#fff" stroke="#4a3c4c" /></svg>
        </span>
      </div>
    </header>
  );
}

function MenuBar() {
  const box = "flex h-[18px] w-[17px] items-center justify-center border border-[#8fa0b2] bg-linear-to-b from-[#eef5fb] to-[#d3e2f1]";
  return (
    <nav className="flex h-[22px] items-center border-b border-[#979797] bg-[#f0f0f0] pl-px">
      <Logo />
      <ul className={`ml-[9px] flex flex-1 tracking-[-0.2px] text-black ${SEGOE}`}>
        {menus.map(([label, k, w]) => (
          <li key={label} className={w}>{label.slice(0, k)}<u className="underline-offset-2">{label[k]}</u>{label.slice(k + 1)}</li>
        ))}
      </ul>
      <div className="mr-[1px] flex gap-px">
        <span className={box}><svg width="9" height="9" viewBox="0 0 9 9"><path d="M1 7h6" stroke="#5c6c80" strokeWidth="2" /></svg></span>
        <span className={box}><svg width="9" height="9" viewBox="0 0 9 9" fill="none" stroke="#5c6c80" strokeWidth="1.300"><path d="M3 3V1h5.300v4.500H6.500M.7 4h5v4h-5z" /></svg></span>
        <span className={box}><svg width="9" height="9" viewBox="0 0 9 9"><path d="M1.500 1.500l6 6M7.500 1.500l-6 6" stroke="#5c6c80" strokeWidth="2.200" /></svg></span>
      </div>
    </nav>
  );
}

function MainToolbar() {
  return (
    <div className="flex h-[30px] items-center border-b border-r border-t border-b-[#a0a0a0] border-r-[#a0a0a0] border-t-white bg-[#f0f0f0] pl-[3px]">
      <Grip />
      <div className="ml-[3px] flex items-center">
        {toolGroups.map((group, g) => (
          <React.Fragment key={g}>
            {g > 0 && <span className="flex w-[6px] justify-center"><i className="h-[22px] w-px bg-[#8c8c8c]" /></span>}
            {group.map((icon, i) => <span key={i} className="flex w-[27px] justify-center"><Icon>{icon}</Icon></span>)}
          </React.Fragment>
        ))}
      </div>
    </div>
  );
}

const layerRows: [string, string][] = [["0", "#ffffff"], ["BORDS_CARTON", "#80ffff"], ["PLIURES", "#80ffff"], ["TROUS", "#80ffff"]];

function LayerToolbar() {
  const combo = "flex h-[20px] border border-[#8a8d93] bg-white";
  return (
    <div className="flex h-[30px] border-b border-t border-b-[#a0a0a0] border-t-white bg-[#f0f0f0]">
      <div className="flex w-[517px] items-center border-r border-[#a0a0a0] pl-[3px]">
        <Grip />
        <span className="ml-[8px] mr-[6px]"><Icon size={17}>{layers}{hand}</Icon></span>
        <div className="relative">
          <div className={`${combo} w-[300px]`}>
            <span className="flex flex-1 items-center gap-[7px] pl-[5px]">
              <LayerState />
              <span className={TAHOMA}>BORDS_CARTON</span>
            </span>
            <ArrowButton />
          </div>
          <ul className="absolute left-0 top-[19px] z-20 w-[300px] border border-[#85888e] bg-white shadow-[3px_3px_4px_rgba(0,0,0,0.45)]">
            {layerRows.map(([name, fill], i) => (
              <li key={name} className={`flex h-[20px] items-center pl-[5px] ${i === 1 ? "bg-[#3398ff]" : ""}`}>
                <LayerState fill={fill} dim={i === 1} />
                <span className={`ml-[7px] flex h-[20px] flex-1 items-center border pl-[3px] tracking-[-0.250px] ${SEGOE} ${i === 1 ? "border-dashed border-[#b8703a] text-white" : "border-transparent text-black"}`}>{name}</span>
              </li>
            ))}
          </ul>
        </div>
      </div>
      <div className="flex items-center pl-[7px]">
        <Grip />
        <div className={`${combo} w-[117px]`}>
          <span className={`flex flex-1 items-center gap-[4px] pl-[5px] ${TAHOMA}`}><Swatch size={12} />ByLayer</span>
          <ArrowButton />
        </div>
        <div className={`${combo} ml-[5px] w-[118px]`}>
          <span className={`flex flex-1 items-center pl-[2px] ${TAHOMA}`}>ByBlock</span>
          <ArrowButton />
        </div>
        <div className={`${combo} ml-[6px] w-[117px]`}>
          <span className={`flex flex-1 items-center pl-px ${TAHOMA}`}>{line}ByLayer</span>
          <ArrowButton />
        </div>
      </div>
    </div>
  );
}

function ToolColumn({ icons, className }: { icons: React.ReactNode[]; className: string }) {
  return (
    <div className={`flex shrink-0 flex-col items-center bg-[#f0f0f0] pt-[4px] ${className}`}>
      <span className="mb-[2px] h-[4px] w-[26px] bg-[radial-gradient(circle,#b4b4b4_1px,transparent_1.3px)] bg-size-[4px_4px]" />
      {icons.map((icon, i) => <span key={i} className="flex h-[26px] items-center"><Icon>{icon}</Icon></span>)}
    </div>
  );
}

/* ---------- bottom area ---------- */

function CommandWindow() {
  return (
    <section className="flex h-[74px] flex-col border-t border-[#6b6b6b] bg-[#f0f0f0] pt-[2px]">
      <header className="flex h-[18px] items-center border border-[#a0a0a0] pl-[2px] pr-[3px]">
        <h2 className={`flex-1 tracking-[-0.050px] ${TAHOMA}`}>Fenêtre de commande</h2>
        <svg width="24" height="9" viewBox="0 0 24 9" fill="none" stroke="#111" strokeWidth="1.300">
          <path d="M3 3V.7h5.300V5.500H6.500M.7 3.500h5v4.800h-5zM16.500 1l6.500 7M23 1l-6.500 7" />
        </svg>
      </header>
      <div className="mt-px flex h-[36px] border border-[#868a93] bg-white font-['Liberation_Sans',sans-serif] text-[13px] leading-[16px] text-black">
        <div className="-mt-px flex-1 pl-[4px] tracking-[0.170px]">
          <p>Substitution de [arsimp.shx] par [xxx.txt]</p>
          <p>Substitution de [Big_Font.shx] par [yyy.txt]</p>
        </div>
        <div className="flex w-[17px] flex-col items-center justify-between bg-[#f1f1f1] py-[7px]">
          <svg width="6" height="4" viewBox="0 0 6 4"><path d="M3 0l3 4H0z" fill="#555" /></svg>
          <svg width="6" height="4" viewBox="0 0 6 4"><path d="M0 0h6L3 4z" fill="#555" /></svg>
        </div>
      </div>
      <p className="h-[16px] bg-white pl-[4px] font-['Liberation_Sans',sans-serif] text-[13px] leading-[17px] text-[#b3651a]">:</p>
    </section>
  );
}

const toggles: [string, string, boolean][] = [
  ["Aimant", "ml-[6px] w-[50px]", false], ["Grille", "ml-[8px] w-[38px]", false], ["Ortho", "ml-[8px] w-[42px]", false],
  ["Polaire", "ml-[10px] w-[46px]", true], ["ESnap", "ml-[8px] w-[43px]", true], ["ETrack", "ml-[8px] w-[45px]", true],
];

function StatusBar() {
  return (
    <footer className="flex h-[15px] overflow-hidden bg-[#f0f0f0] pt-[5px]">
      <i className="-mt-[3px] ml-[524px] h-[20px] w-px shrink-0 bg-[#cfcfcf]" />
      {toggles.map(([label, w, on]) => (
        <span key={label} className={`flex h-[20px] shrink-0 items-start justify-center rounded-[3px] border pt-[2px] ${w} ${TAHOMA} ${on ? "border-[#2c628b] bg-linear-to-b from-[#e2f3fc] to-[#b4def4] shadow-[inset_0_1px_1px_#5b93b8]" : "border-[#707070] bg-linear-to-b from-[#f6f6f6] to-[#dcdcdc]"}`}>{label}</span>
      ))}
      <i className="-mt-[3px] ml-[3px] h-[20px] w-px shrink-0 bg-[#cfcfcf]" />
      <span className={`ml-[4px] pt-[3px] tracking-[-0.150px] ${TAHOMA}`}>(-15.07,251.45,0.00)</span>
    </footer>
  );
}

export default function App() {
  return (
    <div className="flex h-[715px] w-[1366px] flex-col overflow-hidden bg-[#f0f0f0]">
      <TitleBar />
      <MenuBar />
      <MainToolbar />
      <LayerToolbar />
      <main className="flex h-[596px]">
        <ToolColumn icons={drawTools} className="w-[31px] border-b border-r border-[#a0a0a0]" />
        <div className="flex w-[1304px] flex-col">
          <div className="flex h-[522px]">
            <div className="relative flex">
              <span className={`absolute left-0 top-[2px] h-[18px] w-[226px] border border-[#a0a0a0] pl-[2px] ${TAHOMA}`}>Propriétés</span>
              <Properties />
            </div>
            <div className="w-[1069px] border-l border-[#8a8a8a]">
              <Drawing />
              <SheetTabs />
            </div>
          </div>
          <CommandWindow />
        </div>
        <ToolColumn icons={editTools} className="w-[31px] border-b border-[#a0a0a0]" />
      </main>
      <StatusBar />
    </div>
  );
}
